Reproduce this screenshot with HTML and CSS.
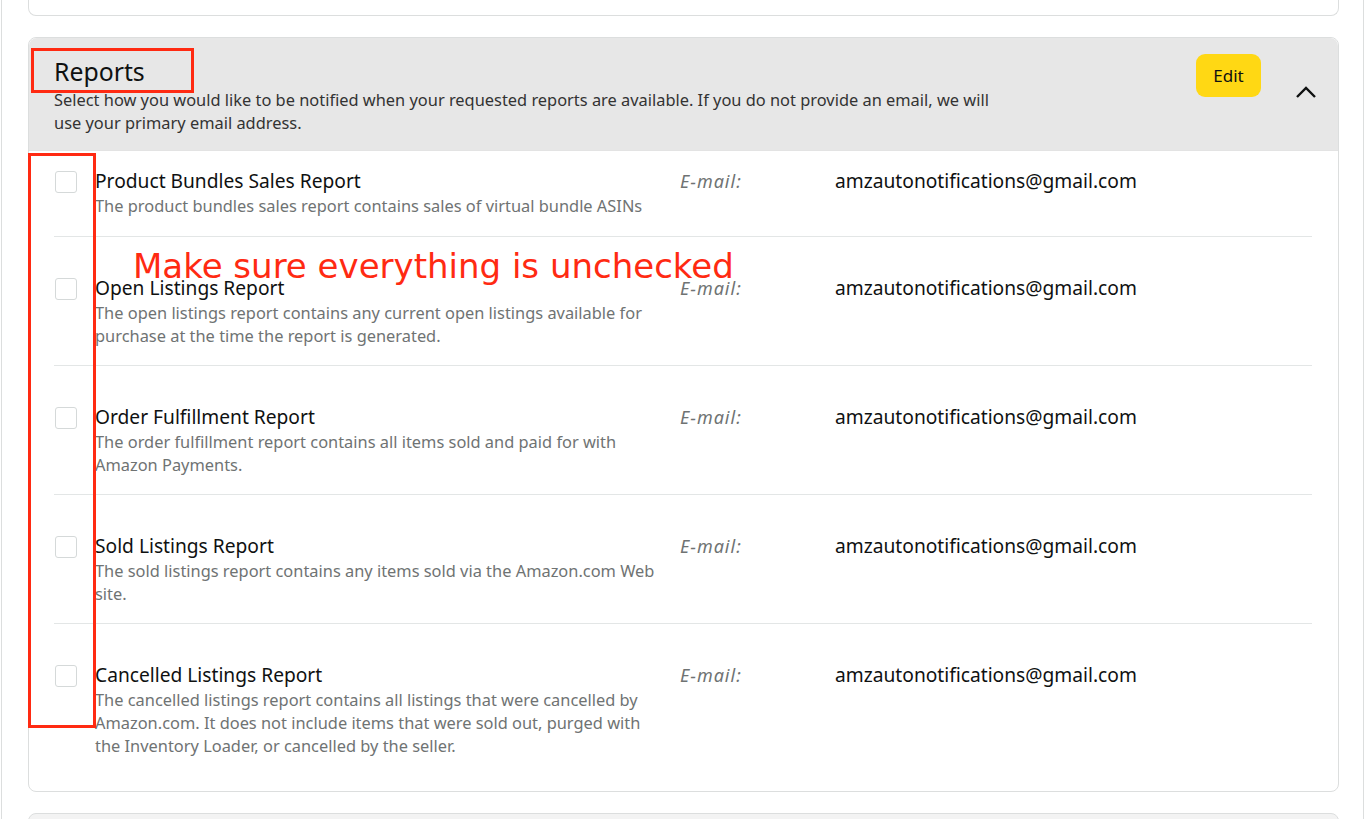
FILE: index.html
```html
<!DOCTYPE html>
<html>
<head>
<meta charset="utf-8">
<link rel="stylesheet" href="styles.css">
</head>
<body>
<div class="page">
  <div class="card card-top"></div>

  <section class="card reports">
    <header class="reports-head">
      <div class="head-text">
        <h2 class="head-title">Reports</h2>
        <p class="head-desc">Select how you would like to be notified when your requested reports are available. If you do not provide an email, we will use your primary email address.</p>
      </div>
      <button class="edit-btn">Edit</button>
      <svg class="chevron" width="22" height="14" viewBox="0 0 22 14"><path d="M2 12 L11 3 L20 12" fill="none" stroke="#0f1111" stroke-width="2.4"/></svg>
    </header>

    <div class="rows">
      <div class="row first">
        <span class="check"></span>
        <div class="info">
          <div class="title">Product Bundles Sales Report</div>
          <div class="desc">The product bundles sales report contains sales of virtual bundle ASINs</div>
        </div>
        <div class="label">E-mail:</div>
        <div class="value">amzautonotifications@gmail.com</div>
      </div>
      <div class="row">
        <span class="check"></span>
        <div class="info">
          <div class="title">Open Listings Report</div>
          <div class="desc">The open listings report contains any current open listings available for purchase at the time the report is generated.</div>
        </div>
        <div class="label">E-mail:</div>
        <div class="value">amzautonotifications@gmail.com</div>
      </div>
      <div class="row">
        <span class="check"></span>
        <div class="info">
          <div class="title">Order Fulfillment Report</div>
          <div class="desc">The order fulfillment report contains all items sold and paid for with Amazon Payments.</div>
        </div>
        <div class="label">E-mail:</div>
        <div class="value">amzautonotifications@gmail.com</div>
      </div>
      <div class="row">
        <span class="check"></span>
        <div class="info">
          <div class="title">Sold Listings Report</div>
          <div class="desc">The sold listings report contains any items sold via the Amazon.com Web site.</div>
        </div>
        <div class="label">E-mail:</div>
        <div class="value">amzautonotifications@gmail.com</div>
      </div>
      <div class="row last">
        <span class="check"></span>
        <div class="info">
          <div class="title">Cancelled Listings Report</div>
          <div class="desc">The cancelled listings report contains all listings that were cancelled by Amazon.com. It does not include items that were sold out, purged with the Inventory Loader, or cancelled by the seller.</div>
        </div>
        <div class="label">E-mail:</div>
        <div class="value">amzautonotifications@gmail.com</div>
      </div>
    </div>

    <div class="mark mark-title"></div>
    <div class="mark mark-checks"></div>
    <div class="note">Make sure everything is unchecked</div>
  </section>

  <div class="card card-next"></div>
</div>
</body>
</html>
```

FILE: styles.css
```css
* { box-sizing: border-box; }
html, body { margin: 0; padding: 0; background: #fff; }
body {
  font-family: "Noto Sans", "Open Sans", sans-serif;
  color: #0f1111;
  width: 1365px;
  height: 819px;
  overflow: hidden;
}
.page {
  margin-left: 1px;
  width: 1363px;
  height: 819px;
  border-left: 1px solid #dcdede;
  border-right: 1px solid #dcdede;
  padding: 0 24px 0 26px;
  overflow: hidden;
}
.card {
  border: 1px solid #dcdede;
  border-radius: 8px;
  background: #fff;
  width: 1311px;
}
.card-top {
  height: 37px;
  margin-top: -21px;
  border-top: none;
}
.reports {
  position: relative;
  margin-top: 21px;
  overflow: visible;
}
.reports-head {
  background: #e7e7e7;
  border-radius: 8px 8px 0 0;
  height: 113px;
  display: flex;
  align-items: flex-start;
  padding: 0 0 0 25px;
  border-bottom: 1px solid #e3e3e3;
}
.head-text { flex: 1; }
.head-title {
  margin: 17px 0 0 0;
  font-size: 24.8px;
  font-weight: 400;
  line-height: 32px;
  color: #0f1111;
}
.head-desc {
  margin: 1px 0 0 0;
  max-width: 960px;
  font-size: 16.4px;
  line-height: 23px;
  color: #333;
}
.edit-btn {
  margin-top: 16px;
  width: 65px;
  height: 43px;
  border: none;
  border-radius: 9px;
  background: #ffd814;
  font-family: inherit;
  font-size: 17px;
  color: #0f1111;
  padding: 0;
}
.chevron {
  margin: 47px 21px 0 34px;
}
.rows {
  padding: 0 26px 14px 25px;
}
.row {
  display: grid;
  grid-template-columns: 41px 585px 155px 1fr;
  align-items: start;
  padding: 38px 0 18px;
  border-bottom: 1px solid #e3e6e6;
}
.row.first { padding-top: 17px; padding-bottom: 19px; }
.row.last { border-bottom: none; padding-bottom: 20px; }
.check {
  display: block;
  width: 22px;
  height: 22px;
  margin-top: 3px;
  border: 1px solid #d5d9d9;
  border-radius: 3px;
  background: #fff;
  margin-left: 1px;
}
.title {
  font-size: 19.2px;
  line-height: 26px;
  color: #0f1111;
}
.desc {
  font-size: 16.4px;
  line-height: 23px;
  color: #6f7373;
  max-width: 572px;
}
.label {
  font-size: 18px;
  letter-spacing: 1px;
  line-height: 26px;
  font-style: italic;
  color: #6f7373;
}
.value {
  font-size: 19.2px;
  line-height: 26px;
  color: #0f1111;
}
.mark {
  position: absolute;
  border: 3px solid #ff2a12;
}
.mark-title {
  left: 2px;
  top: 10px;
  width: 163px;
  height: 45px;
}
.mark-checks {
  left: -1px;
  top: 115px;
  width: 68px;
  height: 575px;
}
.note {
  position: absolute;
  left: 104px;
  top: 208px;
  font-family: "DejaVu Sans", sans-serif;
  font-size: 34px;
  line-height: 40px;
  color: #ff2a12;
  white-space: nowrap;
}
.card-next {
  margin-top: 21px;
  height: 40px;
  background: #f3f3f3;
}
```
